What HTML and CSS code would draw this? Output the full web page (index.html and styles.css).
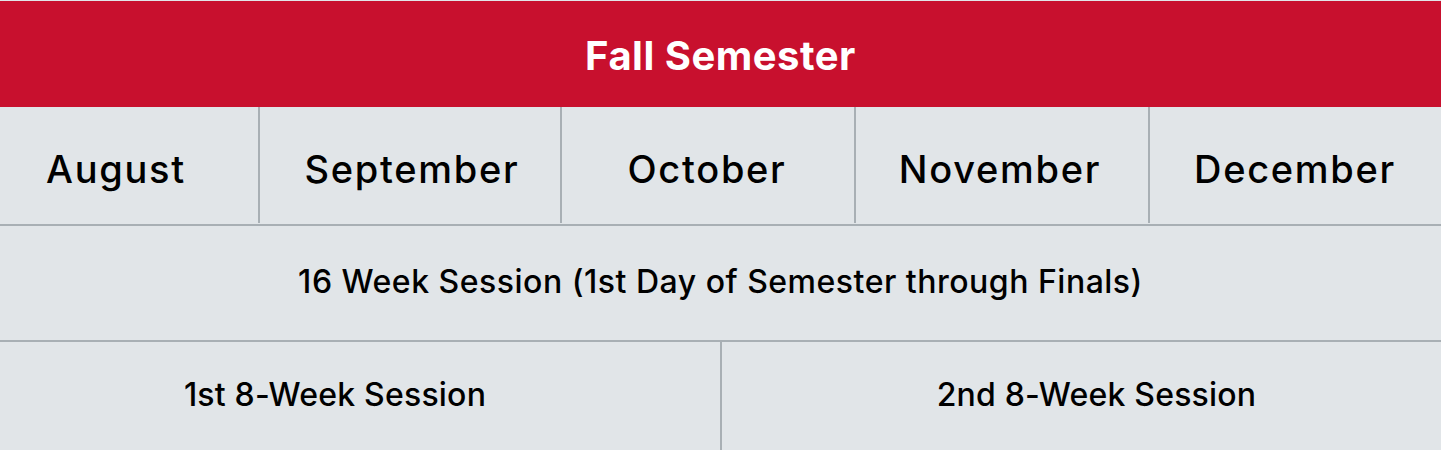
FILE: index.html
```html
<!DOCTYPE html>
<html lang="en">
<head>
<meta charset="utf-8">
<title>Fall Semester</title>
<link rel="stylesheet" href="styles.css">
</head>
<body>
<div class="calendar">
  <div class="title">Fall Semester</div>
  <div class="months">
    <div class="month m-aug">August</div>
    <div class="month m-sep">September</div>
    <div class="month m-oct">October</div>
    <div class="month m-nov">November</div>
    <div class="month m-dec">December</div>
  </div>
  <div class="session-full">16 Week Session (1st Day of Semester through Finals)</div>
  <div class="halves">
    <div class="half half-first">1st 8-Week Session</div>
    <div class="half half-second">2nd 8-Week Session</div>
  </div>
</div>
</body>
</html>
```

FILE: styles.css
```css
html, body {
  margin: 0;
  padding: 0;
  background: #e1e5e8;
}

.calendar {
  width: 1441px;
  padding-top: 1px;
  font-family: Inter, "Liberation Sans", sans-serif;
  color: #000;
}

.title {
  height: 106px;
  box-sizing: border-box;
  padding-top: 2px;
  background: #c8102e;
  color: #fff;
  font-weight: 700;
  font-size: 40px;
  letter-spacing: 0.5px;
  display: flex;
  align-items: center;
  justify-content: center;
}

.months {
  display: flex;
  padding-bottom: 1px;
  border-bottom: 2px solid #a8afb4;
}

.month {
  height: 116px;
  box-sizing: border-box;
  padding-top: 8px;
  display: flex;
  align-items: center;
  justify-content: center;
  font-size: 38px;
  font-weight: 500;
  letter-spacing: 1.7px;
  border-left: 2px solid #a8afb4;
}

.m-aug { width: 258px; border-left: none; padding-right: 26px; }
.m-sep { width: 302px; padding-left: 4px; }
.m-oct { width: 294px; padding-right: 2px; }
.m-nov { width: 294px; padding-right: 4px; }
.m-dec { flex: 1; padding-right: 1px; }

.session-full {
  height: 116px;
  box-sizing: border-box;
  padding-bottom: 3px;
  display: flex;
  align-items: center;
  justify-content: center;
  font-size: 32px;
  font-weight: 500;
  letter-spacing: 0.5px;
  border-bottom: 2px solid #a8afb4;
}

.halves {
  display: flex;
  height: 108px;
}

.half {
  box-sizing: border-box;
  padding-bottom: 3px;
  display: flex;
  align-items: center;
  justify-content: center;
  font-size: 32px;
  font-weight: 500;
  letter-spacing: 0.2px;
}

.half-first { width: 720px; padding-right: 50px; }
.half-second { flex: 1; border-left: 2px solid #a8afb4; padding-left: 30px; }
```
